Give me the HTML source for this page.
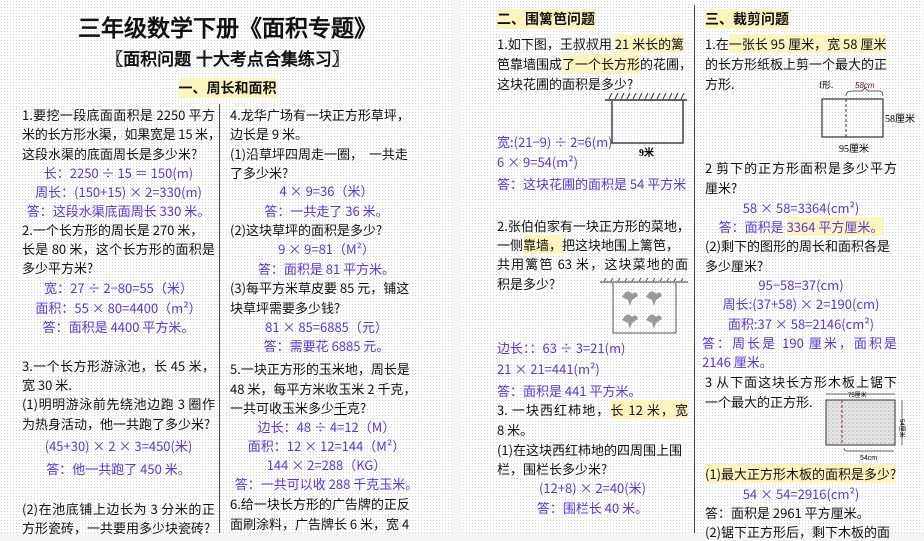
<!DOCTYPE html>
<html><head><meta charset="utf-8"><style>
html,body{margin:0;padding:0}
body{width:924px;height:533px;position:relative;overflow:hidden;background:#f4f5f7;font-family:"Liberation Sans","Noto Sans CJK SC",sans-serif;color:#111}
.pg{position:absolute;top:0;height:533px;background-color:#fff;background-image:radial-gradient(#d4d4d4 0.6px,transparent 0.8px);background-size:3px 3px}
.l{position:absolute;white-space:nowrap;font-size:13px;line-height:19px;font-family:"WenQuanYi Zen Hei","Noto Sans CJK SC",sans-serif}
.j{text-align:justify;text-align-last:justify;white-space:normal}
.p{color:#5a38d0}
.c{text-align:center}
.hl{background:#fff3bf}
.hd{font-weight:bold;font-size:14px}
</style></head><body>
<div class="pg" style="left:0;width:452px"></div>
<div class="pg" style="left:462px;width:462px"></div>
<div style="position:absolute;left:219px;top:104px;width:1px;height:429px;background:#444"></div>
<div style="position:absolute;left:694px;top:5px;width:1px;height:528px;background:#444"></div>

<div class="l c" style="left:40px;width:375px;top:13px;font-size:23px;line-height:30px;font-weight:bold;font-family:'WenQuanYi Zen Hei',sans-serif">三年级数学下册《面积专题》</div>
<div class="l c" style="left:40px;width:375px;top:48px;font-size:17px;line-height:24px;font-weight:bold;font-family:'WenQuanYi Zen Hei',sans-serif">〖面积问题 十大考点合集练习〗</div>
<div class="l c" style="left:40px;width:375px;top:79px;font-weight:bold;font-size:14px"><span class="hl">一、周长和面积</span></div>

<!-- left col1 -->
<div class="l j" style="left:22px;width:193px;top:105px">1.要挖一段底面面积是 2250 平方</div>
<div class="l" style="left:22px;top:124px;letter-spacing:-0.2px">米的长方形水渠，如果宽是 15 米，</div>
<div class="l" style="left:22px;top:144px">这段水渠的底面周长是多少米?</div>
<div class="l p c" style="left:22px;width:193px;top:163px">长：2250 ÷ 15 ＝ 150(m)</div>
<div class="l p c" style="left:22px;width:193px;top:182px">周长：(150+15) × 2=330(m)</div>
<div class="l p c" style="left:22px;width:193px;top:201px">答：这段水渠底面周长 330 米。</div>
<div class="l" style="left:22px;top:220px">2.一个长方形的周长是 270 米，</div>
<div class="l j" style="left:22px;width:193px;top:239px">长是 80 米，这个长方形的面积是</div>
<div class="l" style="left:22px;top:258px">多少平方米?</div>
<div class="l p c" style="left:22px;width:193px;top:278px">宽：27 ÷ 2−80=55（米）</div>
<div class="l p c" style="left:22px;width:193px;top:298px">面积：55 × 80=4400（m²）</div>
<div class="l p c" style="left:22px;width:193px;top:317px">答：面积是 4400 平方米。</div>
<div class="l j" style="left:22px;width:193px;top:356px">3.一个长方形游泳池，长 45 米，</div>
<div class="l" style="left:22px;top:375px">宽 30 米.</div>
<div class="l j" style="left:22px;width:193px;top:394px">(1)明明游泳前先绕池边跑 3 圈作</div>
<div class="l" style="left:22px;top:414px">为热身活动，他一共跑了多少米?</div>
<div class="l p c" style="left:22px;width:193px;top:436px">(45+30) × 2 × 3=450(米)</div>
<div class="l p c" style="left:22px;width:193px;top:459px">答：他一共跑了 450 米。</div>
<div class="l j" style="left:22px;width:193px;top:499px">(2)在池底铺上边长为 3 分米的正</div>
<div class="l" style="left:22px;top:518px">方形瓷砖，一共要用多少块瓷砖?</div>

<!-- left col2 -->
<div class="l" style="left:230px;top:105px">4.龙华广场有一块正方形草坪，</div>
<div class="l" style="left:230px;top:124px">边长是 9 米。</div>
<div class="l" style="left:230px;top:144px">(1)沿草坪四周走一圈，&nbsp; 一共走</div>
<div class="l" style="left:230px;top:163px">了多少米?</div>
<div class="l p c" style="left:230px;width:193px;top:181px">4 × 9=36（米）</div>
<div class="l p c" style="left:230px;width:193px;top:201px">答：一共走了 36 米。</div>
<div class="l" style="left:230px;top:220px">(2)这块草坪的面积是多少?</div>
<div class="l p c" style="left:230px;width:193px;top:239px">9 × 9=81（M²）</div>
<div class="l p c" style="left:230px;width:193px;top:259px">答：面积是 81 平方米。</div>
<div class="l" style="left:230px;top:278px">(3)每平方米草皮要 85 元，铺这</div>
<div class="l" style="left:230px;top:298px">块草坪需要多少钱?</div>
<div class="l p c" style="left:230px;width:193px;top:317px">81 × 85=6885（元）</div>
<div class="l p c" style="left:230px;width:193px;top:336px">答：需要花 6885 元。</div>
<div class="l" style="left:230px;top:359px">5.一块正方形的玉米地，周长是</div>
<div class="l" style="left:230px;top:379px">48 米，每平方米收玉米 2 千克，</div>
<div class="l" style="left:230px;top:398px">一共可收玉米多少<u>千</u>克?</div>
<div class="l p c" style="left:230px;width:193px;top:417px">边长：48 ÷ 4=12（M）</div>
<div class="l p c" style="left:230px;width:193px;top:436px">面积：12 × 12=144（M²）</div>
<div class="l p c" style="left:230px;width:193px;top:455px">144 × 2=288（KG）</div>
<div class="l p c" style="left:230px;width:193px;top:474px">答：一共可以收 288 千克玉米。</div>
<div class="l" style="left:230px;top:494px">6.给一块长方形的广告牌的正反</div>
<div class="l" style="left:230px;top:514px">面刷涂料，广告牌长 6 米，宽 4</div>

<!-- right col1 -->
<div class="l hd" style="left:497px;top:10px"><span class="hl">二、围篱笆问题</span></div>
<div class="l" style="left:497px;top:34px">1.如下图，王叔叔用 <span class="hl">21 米长的篱</span></div>
<div class="l" style="left:497px;top:54px">笆靠墙围成<span class="hl">了一个长方形</span>的花圃，</div>
<div class="l" style="left:497px;top:74px">这块花圃的面积是多少?</div>
<svg style="position:absolute;left:603px;top:91px" width="88" height="68">
<line x1="2" y1="9" x2="84" y2="9" stroke="#333" stroke-width="1.5"/>
<g stroke="#333" stroke-width="1"><path d="M6 8l3-6M12 8l3-6M18 8l3-6M24 8l3-6M30 8l3-6M36 8l3-6M42 8l3-6M48 8l3-6M54 8l3-6M60 8l3-6M66 8l3-6M72 8l3-6M78 8l3-6"/></g>
<path d="M9 10V52H80V10" fill="none" stroke="#444" stroke-width="1.5"/>
<text x="36" y="65" font-size="10" font-weight="bold" font-family="WenQuanYi Zen Hei">9米</text>
</svg>
<div class="l p" style="left:497px;top:132px">宽:(21−9) ÷ 2=6(m)</div>
<div class="l p" style="left:497px;top:152px">6 × 9=54(m²)</div>
<div class="l p" style="left:497px;top:174px">答：这块花圃的面积是 54 平方米</div>
<div class="l" style="left:497px;top:216px">2.张伯伯家有一块正方形的菜地，</div>
<div class="l" style="left:497px;top:235px">一侧<span class="hl">靠墙，</span>把这块地围上篱笆，</div>
<div class="l j" style="left:497px;width:191px;top:254px">共用篱笆 63 米，这块菜地的面</div>
<div class="l" style="left:497px;top:274px">积是多少?</div>
<svg style="position:absolute;left:600px;top:278px" width="90" height="58">
<line x1="0" y1="4" x2="88" y2="4" stroke="#333"/>
<g stroke="#333" stroke-width="0.8"><path d="M4 3l2-3M11 3l2-3M18 3l2-3M25 3l2-3M32 3l2-3M39 3l2-3M46 3l2-3M53 3l2-3M60 3l2-3M67 3l2-3M74 3l2-3M81 3l2-3"/></g>
<path d="M13 5V55H76V5" fill="none" stroke="#555"/>
<g fill="#999"><path d="M24 16q4-5 8 0q4-4 6 2l-6 4 -2 6 -2-6 -6-3z"/><path d="M48 16q4-5 8 0q4-4 6 2l-6 4 -2 6 -2-6 -6-3z"/><path d="M24 39q4-5 8 0q4-4 6 2l-6 4 -2 6 -2-6 -6-3z"/><path d="M48 39q4-5 8 0q4-4 6 2l-6 4 -2 6 -2-6 -6-3z"/></g>
</svg>
<div class="l p" style="left:497px;top:338px">边长：：63 ÷ 3=21(m)</div>
<div class="l p" style="left:497px;top:359px">21 × 21=441(m²)</div>
<div class="l p" style="left:497px;top:381px">答：面积是 441 平方米。</div>
<div class="l j" style="left:497px;width:191px;top:400px">3. 一块西红柿地，<span class="hl">长 12 米，宽</span></div>
<div class="l" style="left:497px;top:420px">8 米。</div>
<div class="l" style="left:497px;top:440px">(1)在这块西红柿地的四周围上围</div>
<div class="l" style="left:497px;top:459px">栏，围栏长多少米?</div>
<div class="l p c" style="left:497px;width:191px;top:478px">(12+8) × 2=40(米)</div>
<div class="l p c" style="left:497px;width:191px;top:498px">答：围栏长 40 米。</div>

<!-- right col2 -->
<div class="l hd" style="left:705px;top:10px"><span class="hl">三、裁剪问题</span></div>
<div class="l" style="left:705px;top:34px">1.在<span class="hl">一张长 95 厘米，宽 58 厘米</span></div>
<div class="l" style="left:705px;top:54px">的长方形纸板上剪一个最大的正</div>
<div class="l" style="left:705px;top:74px">方形.</div>
<svg style="position:absolute;left:815px;top:76px" width="109" height="80">
<text x="4" y="12" font-size="9" font-family="WenQuanYi Zen Hei">f形.</text>
<text x="40" y="12" font-size="8" fill="#611" font-style="italic">58cm</text>
<path d="M31 20q0-5 6-5h10l3-3 3 3h11q4 0 4 5" fill="none" stroke="#333" stroke-width="0.8"/>
<rect x="7" y="23" width="61" height="38" fill="none" stroke="#333" stroke-width="1.2"/>
<line x1="31" y1="23" x2="31" y2="61" stroke="#333" stroke-dasharray="3,2"/>
<text x="70" y="46" font-size="10" font-family="WenQuanYi Zen Hei">58厘米</text>
<text x="24" y="76" font-size="10" font-family="WenQuanYi Zen Hei">95厘米</text>
</svg>
<div class="l j" style="left:705px;width:192px;top:158px">2 剪下的正方形面积是多少平方</div>
<div class="l" style="left:705px;top:178px">厘米?</div>
<div class="l p c" style="left:705px;width:192px;top:198px">58 × 58=3364(cm²)</div>
<div class="l p c" style="left:705px;width:192px;top:217px">答：面积是 <span class="hl">3364 平方厘米。</span></div>
<div class="l" style="left:705px;top:236px">(2)剩下的图形的周长和面积各是</div>
<div class="l" style="left:705px;top:256px">多少厘米?</div>
<div class="l p c" style="left:705px;width:192px;top:275px">95−58=37(cm)</div>
<div class="l p c" style="left:705px;width:192px;top:294px">周长:(37+58) × 2=190(cm)</div>
<div class="l p c" style="left:705px;width:192px;top:314px">面积:37 × 58=2146(cm²)</div>
<div class="l p j" style="left:702px;width:195px;top:333px">答：周长是 190 厘米，面积是</div>
<div class="l p" style="left:702px;top:352px">2146 厘米。</div>
<div class="l j" style="left:705px;width:192px;top:372px">3 从下面这块长方形木板上锯下</div>
<div class="l" style="left:705px;top:392px">一个最大的正方形.</div>
<svg style="position:absolute;left:820px;top:390px" width="104" height="70">
<defs><pattern id="sp" width="4" height="4" patternUnits="userSpaceOnUse"><rect width="4" height="4" fill="#e6e6e6"/><circle cx="1" cy="1" r="0.6" fill="#888"/><circle cx="3" cy="3" r="0.5" fill="#aaa"/></pattern></defs>
<rect x="6" y="10" width="69" height="45" fill="url(#sp)" stroke="#333"/>
<line x1="6" y1="4" x2="75" y2="4" stroke="#333" stroke-width="0.7"/>
<text x="28" y="7" font-size="6">75厘米</text>
<line x1="22" y1="10" x2="22" y2="55" stroke="#a33" stroke-dasharray="3,2"/>
<line x1="82" y1="10" x2="82" y2="55" stroke="#333" stroke-width="0.7"/>
<text x="83" y="38" font-size="6" transform="rotate(90 86 32)">54厘米</text>
<path d="M24 58q0 3 4 3h46" fill="none" stroke="#333" stroke-width="0.7"/>
<text x="40" y="70" font-size="7">54cm</text>
</svg>
<div class="l" style="left:705px;top:464px"><span class="hl">(1)最大正方形木板的面积是多少?</span></div>
<div class="l p c" style="left:705px;width:192px;top:484px">54 × 54=2916(cm²)</div>
<div class="l" style="left:705px;top:503px">答：面积是 2961 平方厘米。</div>
<div class="l" style="left:705px;top:522px">(2)锯下正方形后，剩下木板的面</div>
</body></html>
